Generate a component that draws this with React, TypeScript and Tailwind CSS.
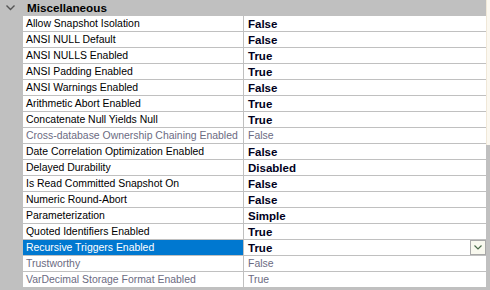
import React from "react";

type Row = { name: string; value: string; disabled?: boolean; selected?: boolean };

const rows: Row[] = [
  { name: "Allow Snapshot Isolation", value: "False" },
  { name: "ANSI NULL Default", value: "False" },
  { name: "ANSI NULLS Enabled", value: "True" },
  { name: "ANSI Padding Enabled", value: "True" },
  { name: "ANSI Warnings Enabled", value: "False" },
  { name: "Arithmetic Abort Enabled", value: "True" },
  { name: "Concatenate Null Yields Null", value: "True" },
  { name: "Cross-database Ownership Chaining Enabled", value: "False", disabled: true },
  { name: "Date Correlation Optimization Enabled", value: "False" },
  { name: "Delayed Durability", value: "Disabled" },
  { name: "Is Read Committed Snapshot On", value: "False" },
  { name: "Numeric Round-Abort", value: "False" },
  { name: "Parameterization", value: "Simple" },
  { name: "Quoted Identifiers Enabled", value: "True" },
  { name: "Recursive Triggers Enabled", value: "True", selected: true },
  { name: "Trustworthy", value: "False", disabled: true },
  { name: "VarDecimal Storage Format Enabled", value: "True", disabled: true },
];

export default function App() {
  return (
    <div
      className="w-[490px] h-[290px] bg-[#c0c0c0] flex overflow-hidden"
      style={{ fontFamily: '"Liberation Sans", Arial, sans-serif' }}
    >
      <div className="w-[486px] flex flex-col">
        <div className="h-[16px] flex items-center">
          <div className="w-[23px] h-[16px] flex items-center justify-center">
            <svg width="9" height="6" viewBox="0 0 9 6" className="ml-[-2px]">
              <path d="M0.5 0.5 L4.5 4.5 L8.5 0.5" fill="none" stroke="#555" strokeWidth="1.4" />
            </svg>
          </div>
          <span className="pl-[4px] text-[11.7px] font-bold text-black leading-[16px]">Miscellaneous</span>
        </div>
        <div className="flex">
          <div className="w-[23px]" />
          <div className="flex-1 flex flex-col">
            {rows.map((r) => (
              <div key={r.name} className="h-[16px] flex border-b border-[#c0c0c0]">
                <div
                  className={
                    "w-[221px] border-r border-[#c0c0c0] pl-[3px] pt-[1px] text-[10.45px] leading-[14px] whitespace-nowrap overflow-hidden " +
                    (r.selected
                      ? "bg-[#0078d0] text-white"
                      : r.disabled
                      ? "bg-white text-[#6b6b82]"
                      : "bg-white text-black")
                  }
                >
                  {r.name}
                </div>
                <div className="flex-1 bg-white flex items-start relative">
                  <span
                    className={
                      "pl-[4px] pt-[1px] leading-[14px] whitespace-nowrap " +
                      (r.disabled
                        ? "text-[10.45px] text-[#6b6b82]"
                        : "text-[11.5px] font-bold text-[#000020]")
                    }
                  >
                    {r.value}
                  </span>
                  {r.selected && (
                    <div className="absolute right-[0px] top-0 w-[16px] h-[15px] bg-[#f8f8ee] border border-[#a8a8a8] flex items-center justify-center">
                      <svg width="8" height="5" viewBox="0 0 8 5">
                        <path d="M0.5 0.5 L4 4 L7.5 0.5" fill="none" stroke="#4a6a4a" strokeWidth="1.2" />
                      </svg>
                    </div>
                  )}
                </div>
              </div>
            ))}
          </div>
        </div>
      </div>
      <div className="w-[4px] flex flex-col">
        <div className="h-[145px] bg-[#fbf8f0] border-l border-[#f0e8d8]" />
        <div className="flex-1 bg-[#c0c0c0]" />
      </div>
    </div>
  );
}
